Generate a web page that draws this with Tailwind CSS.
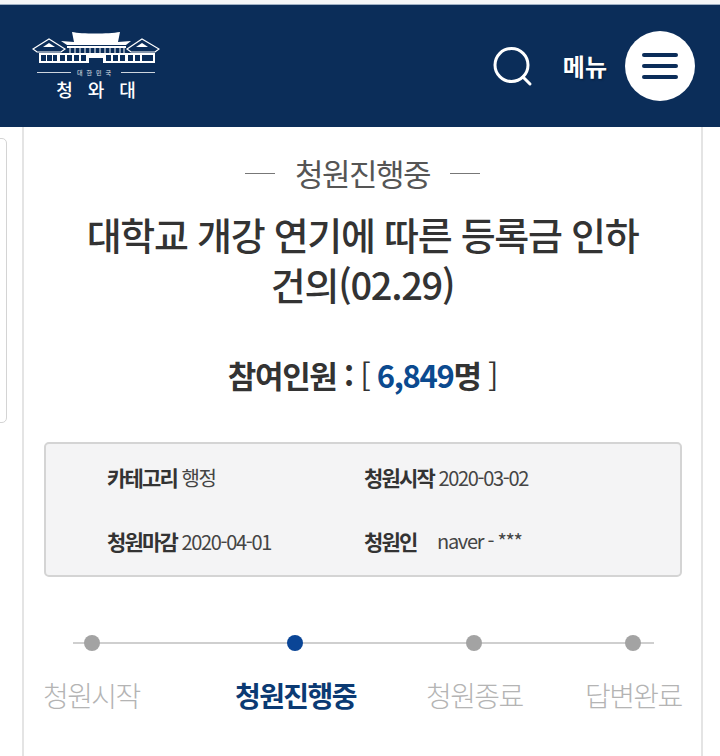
<!DOCTYPE html>
<html lang="ko">
<head>
    <meta charset="UTF-8">
    <meta name="viewport" content="width=device-width, initial-scale=1.0">
    <title>청원진행중</title>
    <script src="https://cdn.jsdelivr.net/npm/@tailwindcss/browser@4"></script>
</head>
<body class="bg-white font-['Noto_Sans_CJK_KR','Noto_Sans',sans-serif] overflow-hidden">
    <div class="relative w-[720px] h-[756px] overflow-hidden">
        <!-- Top strip -->
        <div class="h-[4px] bg-[#f4f6f8]"></div>

        <!-- Header -->
        <header class="h-[123px] bg-[#0b2d59] border-t border-[#9fb0c4] flex items-center justify-between pl-[32px] pr-[25px]">
            <div class="w-[128px] h-[70px] flex flex-col items-center text-white -mt-[1px]">
                <svg class="w-[128px] h-[33px] shrink-0" viewBox="32 32 128 33" fill="none">
                    <!-- main hall -->
                    <path d="M72 33 C82 35 108 35 120 33 L118 43 L131 42 L126 46 L67 46 L61 42 L74 43Z" fill="#fff"/>
                    <path d="M67 47 H126 V49 H67Z" fill="#fff"/>
                    <path d="M70 49 V54 M75 49 V54 M80 49 V54 M85 49 V54 M90 49 V54 M95 49 V54 M100 49 V54 M105 49 V54 M110 49 V54 M115 49 V54 M120 49 V54 M124 49 V54" stroke="#fff" stroke-width="1"/>
                    <!-- side pavilions -->
                    <path d="M33 50 L49 40 L65 50 L61 53 L37 53Z" fill="#0b2d59" stroke="#fff" stroke-width="1.200"/>
                    <path d="M127 50 L142 40 L159 50 L155 53 L131 53Z" fill="#0b2d59" stroke="#fff" stroke-width="1.200"/>
                    <path d="M43 48 L49 44 L55 48Z" fill="#fff"/>
                    <path d="M136 48 L142 44 L148 48Z" fill="#fff"/>
                    <!-- base with windows -->
                    <path d="M39 54 H155 V64 H39Z" fill="#fff"/>
                    <path d="M41 56 H46 V62 H41Z M47 56 H52 V62 H47Z M53 56 H57 V62 H53Z M60 56 H65 V62 H60Z M67 56 H72 V62 H67Z M74 56 H79 V62 H74Z M81 56 H86 V62 H81Z M89 59 H103 V64 H89Z M106 56 H111 V62 H106Z M113 56 H118 V62 H113Z M120 56 H125 V62 H120Z M128 56 H133 V62 H128Z M135 56 H140 V62 H135Z M142 56 H153 V62 H142Z" fill="#0b2d59"/>
                </svg>
                <div class="w-[118px] flex items-center justify-between mt-[5px] h-[8px]">
                    <span class="w-[34px] h-px bg-white/80"></span>
                    <span class="text-[6px] leading-[8px] tracking-[4px] text-white/90 whitespace-nowrap">대한민국</span>
                    <span class="w-[34px] h-px bg-white/80"></span>
                </div>
                <div class="text-[18px] leading-[18px] font-medium tracking-[15px] pl-[15px] mt-[3px]">청와대</div>
            </div>
            <div class="flex items-center">
                <svg class="w-[40px] h-[42px] mr-[30px] mt-[1px]" viewBox="0 0 40 42" fill="none" stroke="#fff" stroke-width="3" stroke-linecap="round">
                    <circle cx="18.500" cy="19" r="16.500"/>
                    <path d="M30 31 L37 38"/>
                </svg>
                <span class="text-white text-[24px] leading-[30px] font-bold tracking-[0px] mr-[18px] [text-shadow:1px_1px_2px_rgba(0,0,0,.4)]">메뉴</span>
                <div class="w-[70px] h-[70px] rounded-full bg-white flex flex-col items-center justify-center gap-[7px]">
                    <span class="w-[36px] h-[4px] rounded bg-[#0b2d59]"></span>
                    <span class="w-[36px] h-[4px] rounded bg-[#0b2d59]"></span>
                    <span class="w-[36px] h-[4px] rounded bg-[#0b2d59]"></span>
                </div>
            </div>
        </header>

        <!-- Side tab peeking in from the left -->
        <div class="absolute left-[-10px] top-[138px] w-[17px] h-[285px] border border-[#d4d4d4] rounded-[5px] bg-white"></div>

        <!-- Petition card -->
        <main class="ml-[22px] w-[681px] h-[629px] border-x-2 border-[#e4e4e4] pt-[28px] flex flex-col items-center text-[#333]">
            <div class="flex items-center gap-[20px] text-[#555]">
                <span class="w-[30px] h-px bg-[#777]"></span>
                <span class="text-[31px] leading-[36px] tracking-[-1.500px]">청원진행중</span>
                <span class="w-[30px] h-px bg-[#777]"></span>
            </div>
            <h1 class="mt-[18px] w-full text-center text-[38px] leading-[50px] font-medium tracking-[-1.300px] text-[#333]">대학교 개강 연기에 따른 등록금 인하<br>건의(02.29)</h1>
            <div class="mt-[44px] text-[31px] leading-[44px] font-bold tracking-[-1.300px] text-[#333]">
                참여인원 : <span class="font-normal">[</span> <span class="text-[#0b4a8f]">6,849</span>명 <span class="font-normal">]</span>
            </div>

            <!-- Info box -->
            <div class="mt-[45px] ml-[1px] w-[638px] h-[135px] rounded-[5px] border-2 border-[#d4d4d4] bg-[#f4f4f5] pl-[61px] grid grid-cols-[257px_1fr] content-center gap-y-[33px] text-[20px] leading-[30px] tracking-[-1.300px] text-[#444]">
                <div><b class="font-bold text-[21px] tracking-[-1.800px] text-[#333]">카테고리</b> 행정</div>
                <div><b class="font-bold text-[21px] tracking-[-1.800px] text-[#333]">청원시작</b> 2020-03-02</div>
                <div><b class="font-bold text-[21px] tracking-[-1.800px] text-[#333]">청원마감</b> 2020-04-01</div>
                <div class="flex"><b class="font-bold text-[21px] tracking-[-1.800px] text-[#333] w-[73px]">청원인</b> naver - ***</div>
            </div>

            <!-- Progress steps -->
            <div class="relative mt-[58px] w-full h-[70px]">
                <div class="absolute left-[49px] top-[7px] w-[581px] h-[2px] bg-[#cfcfcf]"></div>
                <span class="absolute left-[60px] top-0 w-[16px] h-[16px] rounded-full bg-[#a3a3a3]"></span>
                <span class="absolute left-[263px] top-0 w-[16px] h-[16px] rounded-full bg-[#0a4596]"></span>
                <span class="absolute left-[442px] top-0 w-[16px] h-[16px] rounded-full bg-[#a3a3a3]"></span>
                <span class="absolute left-[601px] top-0 w-[16px] h-[16px] rounded-full bg-[#a3a3a3]"></span>
                <span class="absolute left-[19px] top-[40px] text-[28px] leading-[40px] font-light tracking-[-1.600px] text-[#b4b4b4]">청원시작</span>
                <span class="absolute left-[211px] top-[40px] text-[28px] leading-[40px] font-bold tracking-[-1.600px] text-[#0b3a73]">청원진행중</span>
                <span class="absolute left-[402px] top-[40px] text-[28px] leading-[40px] font-light tracking-[-1.600px] text-[#b4b4b4]">청원종료</span>
                <span class="absolute left-[561px] top-[40px] text-[28px] leading-[40px] font-light tracking-[-1.600px] text-[#b4b4b4]">답변완료</span>
            </div>
        </main>
    </div>
</body>
</html>
